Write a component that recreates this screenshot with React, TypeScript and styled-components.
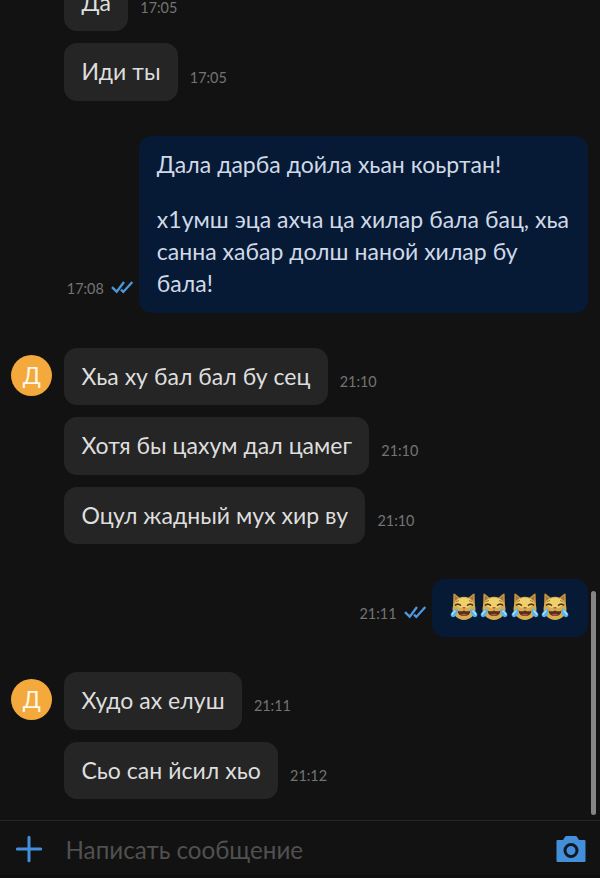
import { FC } from "react";
import styled, { createGlobalStyle } from "styled-components";

const GlobalStyle = createGlobalStyle`
    * {
        box-sizing: border-box;
    }

    body {
        margin: 0;
        background: #121212;
        font-family: Lato, Carlito, "Open Sans", sans-serif;
    }
`;

const Screen = styled.main`
    position: relative;
    display: flex;
    flex-direction: column;
    width: 600px;
    height: 878px;
    overflow: hidden;
    background: #121212;
`;

const Thread = styled.section`
    display: flex;
    flex: 1;
    flex-direction: column;
    justify-content: flex-end;
    gap: 35px;
    min-height: 0;
    padding: 0 12px 20.9px;
    overflow: hidden;
`;

const Group = styled.div`
    display: flex;
    flex-direction: column;
    flex-shrink: 0;
    gap: 12px;
`;

const Row = styled.div<{ $own?: boolean }>`
    display: flex;
    align-items: flex-end;
    justify-content: ${({ $own }) => ($own ? "flex-end" : "flex-start")};
`;

const AvatarSlot = styled.div`
    display: flex;
    align-self: flex-start;
    flex: 0 0 52px;
    padding-top: 7px;
`;

const Avatar = styled.div`
    display: flex;
    align-items: center;
    justify-content: center;
    width: 41px;
    height: 41px;
    margin-left: -0.8px;
    border-radius: 50%;
    background: #f3a93c;
    color: #fff8ea;
    font-size: 23px;
    line-height: 41px;
`;

const Bubble = styled.div<{ $own?: boolean }>`
    padding: ${({ $own }) => ($own ? "12px 19px 13.6px 18px" : "12px 17.3px 13.6px 17.5px")};
    border-radius: 13px;
    background: ${({ $own }) => ($own ? "#061a36" : "#252525")};
    color: ${({ $own }) => ($own ? "#d0d9e6" : "#dedede")};
    font-size: 23px;
    line-height: 32px;
    letter-spacing: 0.03px;
    white-space: nowrap;
`;

const Paragraph = styled.p`
    margin: 0;

    & + & {
        margin-top: 23px;
    }
`;

const Meta = styled.div<{ $own?: boolean }>`
    display: flex;
    align-items: center;
    gap: 7px;
    margin: ${({ $own }) => ($own ? "0 5px 13.4px 0" : "0 0 13.4px 12px")};
    color: #747474;
    font-size: 14.4px;
    line-height: 20px;

    svg {
        margin-bottom: 2px;
    }
`;

const Cats = styled.div`
    display: flex;
    align-items: center;
    gap: 2.5px;
    height: 32px;
`;

const Composer = styled.footer`
    display: flex;
    align-items: center;
    flex: 0 0 58px;
    padding: 0 14px 2px 15px;
    border-top: 1px solid #262626;
    box-shadow: inset 0 -3px 0 #0e0e0e;
`;

const Placeholder = styled.div`
    flex: 1;
    margin-left: 22.5px;
    padding-top: 2px;
    color: #505050;
    font-size: 24.2px;
    line-height: 32px;
`;

const Scrollbar = styled.div`
    position: absolute;
    top: 591px;
    right: 4px;
    width: 5px;
    height: 224px;
    border-radius: 3px;
    background: #858585;
`;

const Checks: FC = () => (
    <svg width="23" height="16" viewBox="0 0 23 16" fill="none" stroke="#4c98e0" strokeWidth="2.3">
        <path d="M1 7.2 5.7 11.7 13 2" />
        <path d="M10 9.7 12.3 11.9 21.3 2" />
    </svg>
);

const CatJoy: FC = () => (
    <svg width="28" height="30" viewBox="0 0 28 30">
        <path d="M3 14 3.4 2Q3.6 1 4.7 1.8L10 6H18L23.3 1.8Q24.4 1 24.6 2L25 14Z" fill="#c4913f" />
        <path d="M5 10 5 4 9 7ZM23 10 23 4 19 7Z" fill="#a37440" />
        <path d="M14 4.8C21 4.8 25.2 10 25.5 17C25.6 23 20 27.8 14 28C8 27.8 2.4 23 2.5 17C2.8 10 7 4.8 14 4.8Z" fill="#d6ad50" />
        <ellipse cx="14" cy="11" rx="8.5" ry="5.2" fill="#eed16c" />
        <path d="M5 13.4Q7.5 10.8 11 13.6M17 13.6Q20.5 10.8 23 13.4" fill="none" stroke="#503317" strokeWidth="1.5" />
        <path d="M6 9.8 9 8.4M22 9.8 19 8.4" stroke="#9e7535" strokeWidth="1" />
        <path d="M12 15H16L14 17.3Z" fill="#b85e48" />
        <path d="M7.5 18.4Q10.5 20.2 14 18.4Q17.5 20.2 20.5 18.4Q20 24 14 24Q8 24 7.5 18.4Z" fill="#592d1c" />
        <path d="M10.5 22.6Q14 20.7 17.5 22.6Q16.5 23.7 14 23.7Q11.5 23.7 10.5 22.6Z" fill="#a85b42" />
        <path d="M6.5 16.5Q8 18.5 6.8 22Q4.5 27 1.4 24.5Q-1.5 21.5 6.5 16.5ZM21.5 16.5Q20 18.5 21.2 22Q23.5 27 26.6 24.5Q29.5 21.5 21.5 16.5Z" fill="#56b5f2" />
        <path d="M5.5 18.8Q2 21 2.4 23M22.5 18.8Q26 21 25.6 23" fill="none" stroke="#b6e5ff" strokeWidth="1.2" />
    </svg>
);

const PlusIcon: FC = () => (
    <svg width="28" height="28" viewBox="0 0 28 28" stroke="#438fda" strokeWidth="3" strokeLinecap="round">
        <path d="M14 2.3V25.7M2.3 14H25.7" />
    </svg>
);

const CameraIcon: FC = () => (
    <svg width="30" height="28" viewBox="0 0 30 28">
        <path d="M1.5 5H7L9.2 1.5Q9.6 1 10.4 1H19.6Q20.4 1 20.8 1.5L23 5H28.5Q29.5 5 29.5 6V26Q29.5 27 28.5 27H1.5Q.5 27 .5 26V6Q.5 5 1.5 5Z" fill="#438fda" />
        <circle cx="15" cy="15.5" r="6" fill="none" stroke="#101820" strokeWidth="3" />
    </svg>
);

interface MessageProps {
    text: string;
    time: string;
    avatar?: string;
}

const Message: FC<MessageProps> = ({ text, time, avatar }) => (
    <Row>
        <AvatarSlot>{avatar && <Avatar>{avatar}</Avatar>}</AvatarSlot>
        <Bubble>{text}</Bubble>
        <Meta>{time}</Meta>
    </Row>
);

const App: FC = () => {
    return (
        <>
            <GlobalStyle />
            <Screen>
                <Thread>
                    <Group>
                        <Message text="Да" time="17:05" />
                        <Message text="Иди ты" time="17:05" />
                    </Group>
                    <Row $own>
                        <Meta $own>17:08 <Checks /></Meta>
                        <Bubble $own>
                            <Paragraph>Дала дарба дойла хьан коьртан!</Paragraph>
                            <Paragraph>
                                х1умш эца ахча ца хилар бала бац, хьа<br />
                                санна хабар долш наной хилар бу<br />
                                бала!
                            </Paragraph>
                        </Bubble>
                    </Row>
                    <Group>
                        <Message text="Хьа ху бал бал бу сец" time="21:10" avatar="Д" />
                        <Message text="Хотя бы цахум дал цамег" time="21:10" />
                        <Message text="Оцул жадный мух хир ву" time="21:10" />
                    </Group>
                    <Row $own>
                        <Meta $own>21:11 <Checks /></Meta>
                        <Bubble $own>
                            <Cats role="img" aria-label="😹😹😹😹">
                                <CatJoy />
                                <CatJoy />
                                <CatJoy />
                                <CatJoy />
                            </Cats>
                        </Bubble>
                    </Row>
                    <Group>
                        <Message text="Худо ах елуш" time="21:11" avatar="Д" />
                        <Message text="Сьо сан йсил хьо" time="21:12" />
                    </Group>
                </Thread>
                <Composer>
                    <PlusIcon />
                    <Placeholder>Написать сообщение</Placeholder>
                    <CameraIcon />
                </Composer>
                <Scrollbar />
            </Screen>
        </>
    );
};

export default App;
